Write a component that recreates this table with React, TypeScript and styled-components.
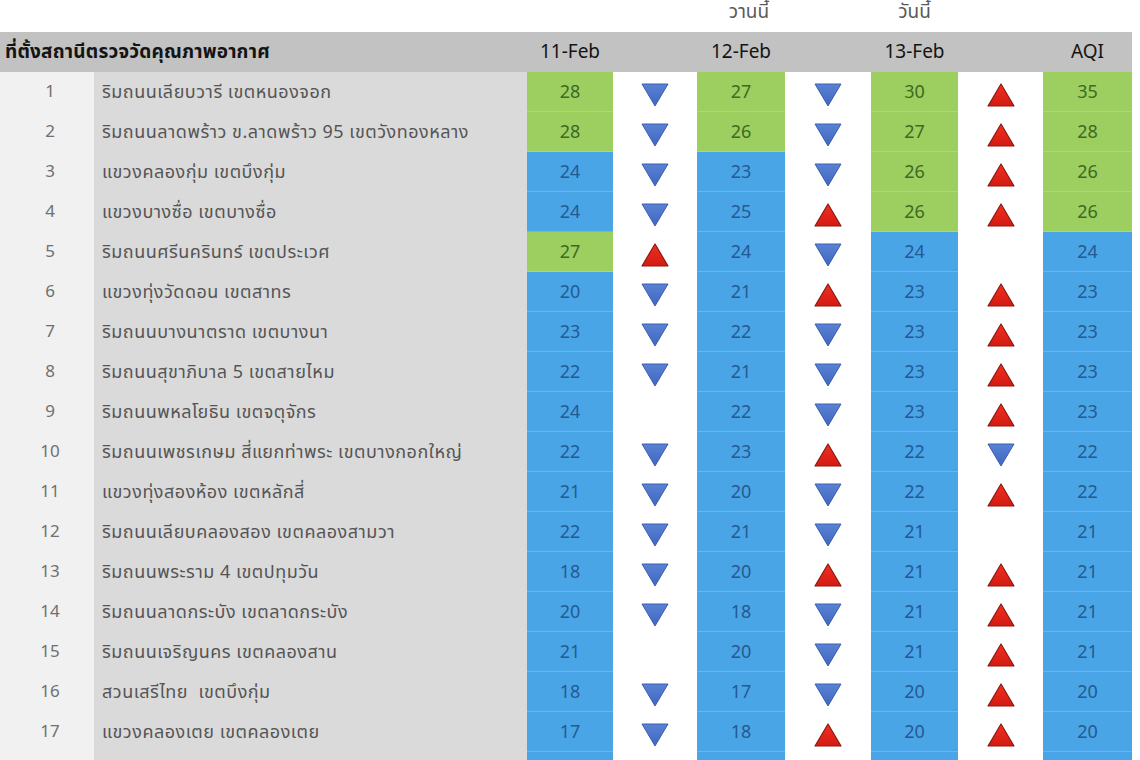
import React from "react";
import styled, { createGlobalStyle } from "styled-components";

const GlobalStyle = createGlobalStyle`
  html, body { margin: 0; padding: 0; background: #ffffff; overflow: hidden; }
  body { width: 1140px; height: 760px; font-family: Tahoma, "Noto Sans Thai", "DejaVu Sans", sans-serif; }
`;

const COLS = "94px 433px 86px 84px 88px 86px 87px 85px 89px";

type Trend = "up" | "down" | null;
type Level = "g" | "b";
type Row = {
  n: number;
  name: string;
  v: [number, number, number, number];
  c: [Level, Level, Level, Level];
  t: [Trend, Trend, Trend];
};

const rows: Row[] = [
  { n: 1, name: "ริมถนนเลียบวารี เขตหนองจอก", v: [28, 27, 30, 35], c: ["g", "g", "g", "g"], t: ["down", "down", "up"] },
  { n: 2, name: "ริมถนนลาดพร้าว ข.ลาดพร้าว 95 เขตวังทองหลาง", v: [28, 26, 27, 28], c: ["g", "g", "g", "g"], t: ["down", "down", "up"] },
  { n: 3, name: "แขวงคลองกุ่ม เขตบึงกุ่ม", v: [24, 23, 26, 26], c: ["b", "b", "g", "g"], t: ["down", "down", "up"] },
  { n: 4, name: "แขวงบางซื่อ เขตบางซื่อ", v: [24, 25, 26, 26], c: ["b", "b", "g", "g"], t: ["down", "up", "up"] },
  { n: 5, name: "ริมถนนศรีนครินทร์ เขตประเวศ", v: [27, 24, 24, 24], c: ["g", "b", "b", "b"], t: ["up", "down", null] },
  { n: 6, name: "แขวงทุ่งวัดดอน เขตสาทร", v: [20, 21, 23, 23], c: ["b", "b", "b", "b"], t: ["down", "up", "up"] },
  { n: 7, name: "ริมถนนบางนาตราด เขตบางนา", v: [23, 22, 23, 23], c: ["b", "b", "b", "b"], t: ["down", "down", "up"] },
  { n: 8, name: "ริมถนนสุขาภิบาล 5 เขตสายไหม", v: [22, 21, 23, 23], c: ["b", "b", "b", "b"], t: ["down", "down", "up"] },
  { n: 9, name: "ริมถนนพหลโยธิน เขตจตุจักร", v: [24, 22, 23, 23], c: ["b", "b", "b", "b"], t: [null, "down", "up"] },
  { n: 10, name: "ริมถนนเพชรเกษม สี่แยกท่าพระ เขตบางกอกใหญ่", v: [22, 23, 22, 22], c: ["b", "b", "b", "b"], t: ["down", "up", "down"] },
  { n: 11, name: "แขวงทุ่งสองห้อง เขตหลักสี่", v: [21, 20, 22, 22], c: ["b", "b", "b", "b"], t: ["down", "down", "up"] },
  { n: 12, name: "ริมถนนเลียบคลองสอง เขตคลองสามวา", v: [22, 21, 21, 21], c: ["b", "b", "b", "b"], t: ["down", "down", null] },
  { n: 13, name: "ริมถนนพระราม 4 เขตปทุมวัน", v: [18, 20, 21, 21], c: ["b", "b", "b", "b"], t: ["down", "up", "up"] },
  { n: 14, name: "ริมถนนลาดกระบัง เขตลาดกระบัง", v: [20, 18, 21, 21], c: ["b", "b", "b", "b"], t: ["down", "down", "up"] },
  { n: 15, name: "ริมถนนเจริญนคร เขตคลองสาน", v: [21, 20, 21, 21], c: ["b", "b", "b", "b"], t: [null, "down", "up"] },
  { n: 16, name: "สวนเสรีไทย  เขตบึงกุ่ม", v: [18, 17, 20, 20], c: ["b", "b", "b", "b"], t: ["down", "down", "up"] },
  { n: 17, name: "แขวงคลองเตย เขตคลองเตย", v: [17, 18, 20, 20], c: ["b", "b", "b", "b"], t: ["down", "up", "up"] },
  { n: 18, name: "ริมถนนอินทรพิทักษ์ เขตธนบุรี", v: [19, 17, 19, 19], c: ["b", "b", "b", "b"], t: ["down", "down", "up"] },
];

const Page = styled.div`
  width: 1132px;
  display: flex;
  flex-direction: column;
`;

const TopBand = styled.div`
  display: grid;
  grid-template-columns: ${COLS};
  height: 32px;
  align-items: end;
`;

const TopLabel = styled.div<{ $col: number; $shift?: number }>`
  grid-column: ${(p) => p.$col};
  text-align: center;
  font-size: 19px;
  line-height: 20px;
  color: #5a5a5a;
  padding-bottom: 9px;
  transform: translateX(${(p) => p.$shift ?? 0}px);
`;

const HeaderRow = styled.div`
  display: grid;
  grid-template-columns: ${COLS};
  height: 40px;
  background: #c2c2c2;
  align-items: center;
  color: #141414;
  font-size: 19px;
`;

const HeaderTitle = styled.div`
  grid-column: 1 / 3;
  padding-left: 5px;
  font-weight: bold;
  white-space: nowrap;
  letter-spacing: 0.2px;
`;

const HeaderDate = styled.div<{ $col: number }>`
  grid-column: ${(p) => p.$col};
  text-align: center;
`;

const DataRow = styled.div`
  display: grid;
  grid-template-columns: ${COLS};
  height: 40px;
`;

const NumCell = styled.div`
  background: #f1f1f1;
  color: #707070;
  font-size: 17px;
  display: flex;
  align-items: center;
  justify-content: center;
  padding-left: 6px;
`;

const NameCell = styled.div`
  background: #dadada;
  color: #555555;
  font-size: 18px;
  letter-spacing: 0.5px;
  display: flex;
  align-items: center;
  padding-left: 8px;
  white-space: pre;
`;

const ValueCell = styled.div<{ $level: Level }>`
  background: ${(p) => (p.$level === "g" ? "#9ccf60" : "#4aa5e6")};
  color: ${(p) => (p.$level === "g" ? "#3d6a22" : "#245a92")};
  font-size: 18px;
  display: flex;
  align-items: center;
  justify-content: center;
  box-shadow: inset 0 -1px 0 rgba(255, 255, 255, 0.18);
`;

const ArrowCell = styled.div`
  background: #ffffff;
  display: flex;
  align-items: center;
  justify-content: center;
  padding-top: 6px;
`;

const TrendIcon: React.FC<{ t: Trend }> = ({ t }) => {
  if (t === "down") {
    return (
      <svg width="28" height="24" viewBox="0 0 28 24">
        <defs>
          <linearGradient id="dg" x1="0" y1="0" x2="0" y2="1">
            <stop offset="0" stopColor="#5a82d6" />
            <stop offset="1" stopColor="#3d66bd" />
          </linearGradient>
        </defs>
        <polygon points="1,1 27,1 14,23" fill="url(#dg)" stroke="#3a5fae" strokeWidth="1" strokeLinejoin="round" />
      </svg>
    );
  }
  if (t === "up") {
    return (
      <svg width="28" height="24" viewBox="0 0 28 24">
        <defs>
          <linearGradient id="ug" x1="0" y1="0" x2="0" y2="1">
            <stop offset="0" stopColor="#f0301f" />
            <stop offset="1" stopColor="#d41a12" />
          </linearGradient>
        </defs>
        <polygon points="14,1 27,23 1,23" fill="url(#ug)" stroke="#8a1a14" strokeWidth="1.2" strokeLinejoin="round" />
      </svg>
    );
  }
  return null;
};

export default function App() {
  return (
    <>
      <GlobalStyle />
      <Page>
        <TopBand>
          <TopLabel $col={5} $shift={8}>วานนี้</TopLabel>
          <TopLabel $col={7}>วันนี้</TopLabel>
        </TopBand>
        <HeaderRow>
          <HeaderTitle>ที่ตั้งสถานีตรวจวัดคุณภาพอากาศ</HeaderTitle>
          <HeaderDate $col={3}>11-Feb</HeaderDate>
          <HeaderDate $col={5}>12-Feb</HeaderDate>
          <HeaderDate $col={7}>13-Feb</HeaderDate>
          <HeaderDate $col={9}>AQI</HeaderDate>
        </HeaderRow>
        {rows.map((r) => (
          <DataRow key={r.n}>
            <NumCell>{r.n}</NumCell>
            <NameCell>{r.name}</NameCell>
            <ValueCell $level={r.c[0]}>{r.v[0]}</ValueCell>
            <ArrowCell><TrendIcon t={r.t[0]} /></ArrowCell>
            <ValueCell $level={r.c[1]}>{r.v[1]}</ValueCell>
            <ArrowCell><TrendIcon t={r.t[1]} /></ArrowCell>
            <ValueCell $level={r.c[2]}>{r.v[2]}</ValueCell>
            <ArrowCell><TrendIcon t={r.t[2]} /></ArrowCell>
            <ValueCell $level={r.c[3]}>{r.v[3]}</ValueCell>
          </DataRow>
        ))}
      </Page>
    </>
  );
}
